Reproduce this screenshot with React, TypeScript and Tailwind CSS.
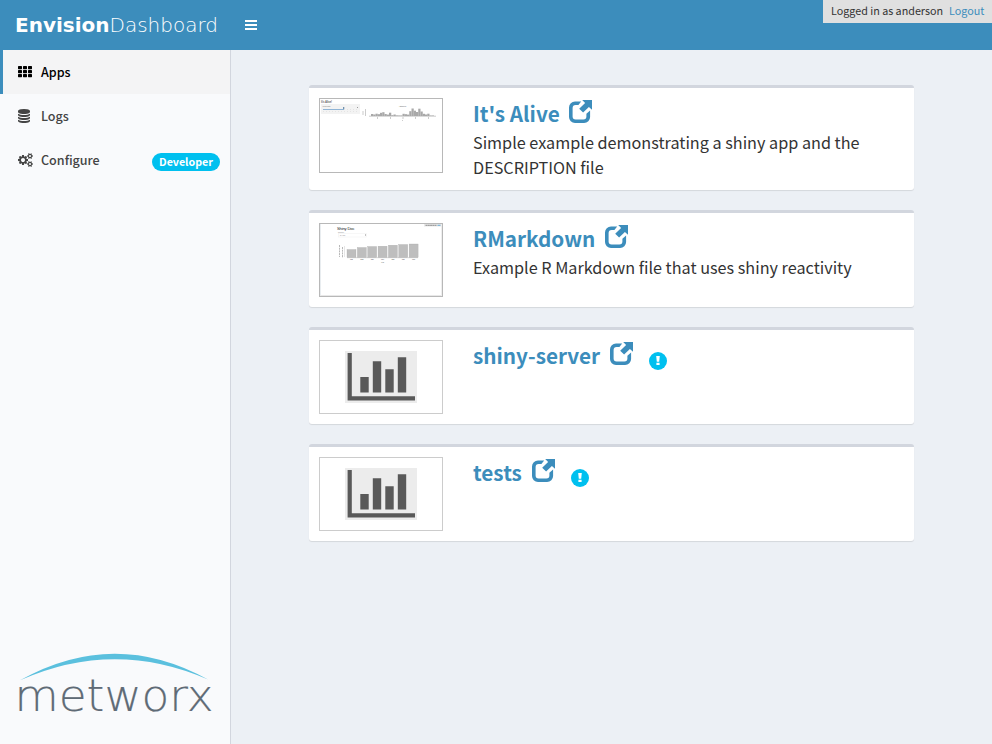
import type { ReactNode } from "react";

function ThIcon() {
  return (
    <svg width="14" height="12" viewBox="0 0 14 12" fill="currentColor" className="block">
      {[0, 4, 8].map((y) => [0, 5, 10].map((x) => <rect key={`${x}-${y}`} x={x} y={y} width="4" height="3.2" rx="0.6" />))}
    </svg>
  );
}

function DatabaseIcon() {
  return (
    <svg width="12" height="14" viewBox="0 0 1536 1792" fill="currentColor" className="block">
      <path d="M768 768q237 0 443-43t325-127v170q0 69-103 128t-280 93.5-385 34.5-385-34.5-280-93.5-103-128v-170q119 84 325 127t443 43zm0 768q237 0 443-43t325-127v170q0 69-103 128t-280 93.5-385 34.5-385-34.5-280-93.5-103-128v-170q119 84 325 127t443 43zm0-384q237 0 443-43t325-127v170q0 69-103 128t-280 93.5-385 34.5-385-34.5-280-93.5-103-128v-170q119 84 325 127t443 43zm0-1152q208 0 385 34.5t280 93.5 103 128v128q0 69-103 128t-280 93.5-385 34.5-385-34.5-280-93.5-103-128v-128q0-69 103-128t280-93.5 385-34.5z" />
    </svg>
  );
}

function CogsIcon() {
  return (
    <svg width="15" height="14" viewBox="0 0 1920 1792" fill="currentColor" className="block">
      <path d="M896 896q0-106-75-181t-181-75-181 75-75 181 75 181 181 75 181-75 75-181zm768 512q0-52-38-90t-90-38-90 38-38 90q0 53 37.5 90.5t90.5 37.5 90.5-37.5 37.5-90.5zm0-1024q0-52-38-90t-90-38-90 38-38 90q0 53 37.5 90.5t90.5 37.5 90.5-37.5 37.5-90.5zm-384 421v185q0 10-7 19.5t-16 10.5l-155 24q-11 35-32 76 34 48 90 115 7 11 7 20 0 12-7 19-23 30-82.5 89.5t-78.5 59.5q-11 0-21-7l-115-90q-37 19-77 31-11 108-23 155-7 24-30 24h-186q-11 0-20-7.5t-10-17.5l-23-153q-34-10-75-31l-118 89q-7 7-20 7-11 0-21-8-144-133-144-160 0-9 7-19 10-14 41-53t47-61q-23-44-35-82l-152-24q-10-1-17-9.5t-7-19.5v-185q0-10 7-19.5t16-10.5l155-24q11-35 32-76-34-48-90-115-7-11-7-20 0-12 7-20 22-30 82-89t79-59q11 0 21 7l115 90q34-18 77-32 11-108 23-154 7-24 30-24h186q11 0 20 7.5t10 17.5l23 153q34 10 75 31l118-89q8-7 20-7 11 0 21 8 144 133 144 160 0 8-7 19-12 16-42 54t-45 60q23 48 34 82l152 23q10 2 17 10.5t7 19.5zm640 533v140q0 16-149 31-12 27-30 52 51 113 51 138 0 4-4 7-122 71-124 71-8 0-46-47t-52-68q-20 2-30 2t-30-2q-14 21-52 68t-46 47q-2 0-124-71-4-3-4-7 0-25 51-138-18-25-30-52-149-15-149-31v-140q0-16 149-31 13-29 30-52-51-113-51-138 0-4 4-7 4-2 35-20t59-34 30-16q8 0 46 46.5t52 67.5q20-2 30-2t30 2q51-71 92-112l6-2q4 0 124 70 4 3 4 7 0 25-51 138 17 23 30 52 149 15 149 31zm0-1024v140q0 16-149 31-12 27-30 52 51 113 51 138 0 4-4 7-122 71-124 71-8 0-46-47t-52-68q-20 2-30 2t-30-2q-14 21-52 68t-46 47q-2 0-124-71-4-3-4-7 0-25 51-138-18-25-30-52-149-15-149-31v-140q0-16 149-31 13-29 30-52-51-113-51-138 0-4 4-7 4-2 35-20t59-34 30-16q8 0 46 46.5t52 67.5q20-2 30-2t30 2q51-71 92-112l6-2q4 0 124 70 4 3 4 7 0 25-51 138 17 23 30 52 149 15 149 31z" />
    </svg>
  );
}

function NewWindowIcon() {
  return (
    <svg width="24" height="24" viewBox="0 0 24 24" className="block shrink-0">
      <path d="M12.2 1.6L9.4 5H6.6A3 3 0 0 0 3.6 8v8.4a3 3 0 0 0 3 3h7.8a3 3 0 0 0 3-3v-2.6l3.7-3.4V17a6 6 0 0 1-6 6H6a6 6 0 0 1-6-6V7.6a6 6 0 0 1 6-6z" fill="currentColor" />
      <path d="M13.2 0H23v9.8L19.9 6.9l-5.8 5.7-3.9-3.9 5.9-5.8z" fill="currentColor" />
    </svg>
  );
}

function AlertBadge() {
  return (
    <svg width="18" height="18" viewBox="0 0 18 18" className="block shrink-0">
      <circle cx="9" cy="9" r="9" fill="#00c0ef" />
      <path d="M7.2 4h3.6l-.6 5.8H7.8zM7.4 10.7h3.2V13H7.4z" fill="#fff" />
    </svg>
  );
}

function HistogramShot() {
  const bars = [2, 1.5, 2.3, 1.8, 3.2, 3.8, 2, 1.4, 3.3, 0.8, 1.5, 0.6, 0.5, 0.5, 2.2, 1.8, 1.4, 4.8, 7.5, 5.3, 4, 7.3, 4.5, 2.2, 1.5, 2.3, 0.5, 0.5];
  return (
    <svg width="122" height="73" viewBox="0 0 122 73" className="block">
      <text x="1" y="3.8" fontSize="2.8" fontWeight="bold" textLength="11" fill="#666" fontFamily="Liberation Sans">It's Alive!</text>
      <rect x="1" y="5" width="39" height="10" fill="#f3f3f3" />
      <text x="2.5" y="8.2" fontSize="1.8" textLength="8" fill="#999" fontFamily="Liberation Sans">Number of bins</text>
      <rect x="3" y="10" width="21" height="1" fill="#8fb4d6" />
      <path d="M24 10.5H38M3 12.5H38" stroke="#dcdcdc" strokeWidth=".7" strokeDasharray="1 2" />
      <rect x="23" y="8" width="1.3" height="2" fill="#7392ad" />
      <rect x="37" y="8" width="1" height="1" fill="#999" />
      <text x="79" y="8" fontSize="1.8" textLength="7.5" fill="#888" fontFamily="Liberation Sans">Histogram of x</text>
      <path d="M43 12v4M45.5 10v7M49 17.2h67" stroke="#aaa" strokeWidth=".6" />
      {bars.map((h, i) => <rect key={i} x={51 + i * 2.25} y={17 - h} width="2.25" height={h} fill="#a9a9a9" />)}
      <path d="M57.5 18v2M70.5 18v2M83 18v2M95.5 18v2M108.5 18v2M82.5 21v1" stroke="#aaa" strokeWidth=".6" />
    </svg>
  );
}

function ShinyDocShot() {
  const bars = [8, 10, 11, 11.3, 12.3, 13, 13.5];
  return (
    <svg width="122" height="72" viewBox="0 0 122 72" className="block">
      <rect x="0" y="0" width="1" height="72" fill="#e9edf0" />
      <rect x="0" y="71" width="122" height="1" fill="#e8e8e8" />
      <rect x="121" y="0" width="1" height="72" fill="#eee" />
      <text x="17" y="5.6" fontSize="4.2" textLength="17.5" fill="#222" fontFamily="Liberation Sans">Shiny Doc</text>
      <text x="18" y="8.8" fontSize="1.8" fill="#888" fontFamily="Liberation Sans">Region:</text>
      <rect x="18.5" y="9.5" width="28" height="3.5" fill="#fff" stroke="#f2f2f2" strokeWidth=".6" />
      <text x="20" y="12.2" fontSize="1.6" fill="#888" fontFamily="Liberation Sans">N.Amer</text>
      <rect x="45" y="10.5" width="1" height="1" fill="#888" />
      <rect x="104" y="0" width="17" height="2.5" fill="#e8e8e8" />
      <path d="M105.5 1.3h11" stroke="#777" strokeWidth=".8" strokeDasharray="2 .3" />
      <path d="M117.5 1.3h3" stroke="#4a9acb" strokeWidth=".8" />
      <path d="M19.5 21v12M22.5 23v11" stroke="#999" strokeWidth=".7" strokeDasharray="2 .7" />
      <path d="M24.5 22v11" stroke="#ccc" strokeWidth=".5" />
      <rect x="27" y="33" width="71" height="1.2" fill="#ddd" />
      {bars.map((h, i) => (
        <g key={i}>
          <rect x={27 + i * 10.35} y={33.5 - h} width="9" height={h} fill="#bebebe" stroke="#aaa" strokeWidth=".3" />
          <text x={30 + i * 10.35} y="36.3" fontSize="1.6" textLength="3" fill="#555" fontFamily="Liberation Sans">{1951 + i}</text>
        </g>
      ))}
      <text x="61" y="39.3" fontSize="1.6" textLength="3" fill="#555" fontFamily="Liberation Sans">Year</text>
    </svg>
  );
}

function PlaceholderShot() {
  return (
    <svg width="122" height="72" viewBox="0 0 122 72" className="block">
      <rect x="25" y="10" width="72" height="52" fill="#ececec" />
      <path d="M27.6 12h4.2v43.2H95v4.4H27.6z" fill="#595959" />
      <path d="M40.3 36h8.4v15.5h-8.4zM52.8 20.3h8.4v31.2h-8.4zM65.3 28.2h8.4v23.3h-8.4zM77.8 16.3h8.4v35.2h-8.4z" fill="#595959" />
    </svg>
  );
}

type App = { name: string; text?: string; alert?: boolean; shot: ReactNode; frame: string; height: string };

const apps: App[] = [
  { name: "It's Alive", text: "Simple example demonstrating a shiny app and the DESCRIPTION file", shot: <HistogramShot />, frame: "h-[75px] border-[#b8b8b8]", height: "h-[105px]" },
  { name: "RMarkdown", text: "Example R Markdown file that uses shiny reactivity", shot: <ShinyDocShot />, frame: "h-[74px] border-[#b8b8b8]", height: "h-[97px]" },
  { name: "shiny-server", alert: true, shot: <PlaceholderShot />, frame: "h-[74px] border-[#ccc]", height: "h-[97px]" },
  { name: "tests", alert: true, shot: <PlaceholderShot />, frame: "h-[74px] border-[#ccc]", height: "h-[97px]" },
];

function AppCard({ app }: { app: App }) {
  return (
    <article className={`flex rounded-[3px] border-t-[3px] border-[#d2d6de] bg-white p-2.5 shadow-[0_1px_1px_rgba(0,0,0,0.1)] ${app.height}`}>
      <div className={`w-[124px] shrink-0 border ${app.frame}`}>{app.shot}</div>
      <div className="ml-[30px] w-[410px]">
        <h2 className="flex h-8 text-[#3c8dbc]">
          <span className="text-[20.72px] leading-[31px] font-bold whitespace-nowrap">{app.name}</span>
          <span className="mt-0.5 ml-[9.8px]"><NewWindowIcon /></span>
          {app.alert && <span className="mt-3 ml-[15px]"><AlertBadge /></span>}
        </h2>
        {app.text && <p className="text-[16.22px] leading-[25px]">{app.text}</p>}
      </div>
    </article>
  );
}

export default function App() {
  return (
    <div className="flex h-[744px] w-[992px] flex-col overflow-hidden bg-[#ecf0f5] font-['Noto_Sans_CJK_SC',sans-serif] text-[#333]">
      <header className="flex h-[50px] shrink-0 bg-[#3c8dbc] text-white">
        <div className="w-[230px] pl-[15px] font-['DejaVu_Sans',sans-serif] text-[20px] leading-[50px] whitespace-nowrap">
          <span className="font-bold">Envision</span>
          <span className="font-extralight">Dashboard</span>
        </div>
        <button className="ml-[15px] flex h-[50px] w-3 flex-col justify-center gap-0.5" aria-label="Toggle navigation">
          <span className="h-0.5 w-3 bg-white" />
          <span className="h-0.5 w-3 bg-white" />
          <span className="h-0.5 w-3 bg-white" />
        </button>
        <div className="ml-auto flex h-[23px] w-[169px] gap-1.5 bg-[#e0e0e0] pl-2 text-[10.75px] leading-[22px] whitespace-nowrap text-[#333]">
          <span>Logged in as anderson</span>
          <a className="text-[#3c8dbc]">Logout</a>
        </div>
      </header>
      <div className="flex grow">
        <aside className="flex w-[231px] shrink-0 flex-col border-r border-[#d2d6de] bg-[#f9fafc] text-[12.55px] font-medium text-[#444]">
          <nav>
            <a className="flex h-11 items-center border-l-[3px] border-[#3c8dbc] bg-[#f4f4f5] pl-[15px] text-black">
              <span className="w-[23px]"><ThIcon /></span>
              <span>Apps</span>
            </a>
            <a className="flex h-11 items-center pl-[18px]">
              <span className="w-[23px]"><DatabaseIcon /></span>
              <span>Logs</span>
            </a>
            <a className="flex h-11 items-center pr-2.5 pl-[18px]">
              <span className="w-[23px]"><CogsIcon /></span>
              <span>Configure</span>
              <span className="mt-[3px] ml-auto flex h-[18px] w-[68px] items-center justify-center rounded-full bg-[#00c0ef] pt-px text-[10.7px] font-bold text-white">Developer</span>
            </a>
          </nav>
          <svg width="210" height="78" viewBox="0 0 210 78" className="mt-auto mb-4 ml-[15px]" aria-label="metworx">
            <path d="M5 30.3Q99-22.5 193 29.5Q99-11.5 5 30.3z" fill="#5bc0de" />
            <text x="-0.5" y="60.5" textLength="199" lengthAdjust="spacingAndGlyphs" fill="#5f6b76" stroke="#5f6b76" strokeWidth=".2" fontSize="44.5" fontWeight="200" fontFamily="DejaVu Sans">metworx</text>
          </svg>
        </aside>
        <main className="flex w-[683px] flex-col gap-5 pt-[35px] pl-[78px]">
          {apps.map((app) => <AppCard key={app.name} app={app} />)}
        </main>
      </div>
    </div>
  );
}
